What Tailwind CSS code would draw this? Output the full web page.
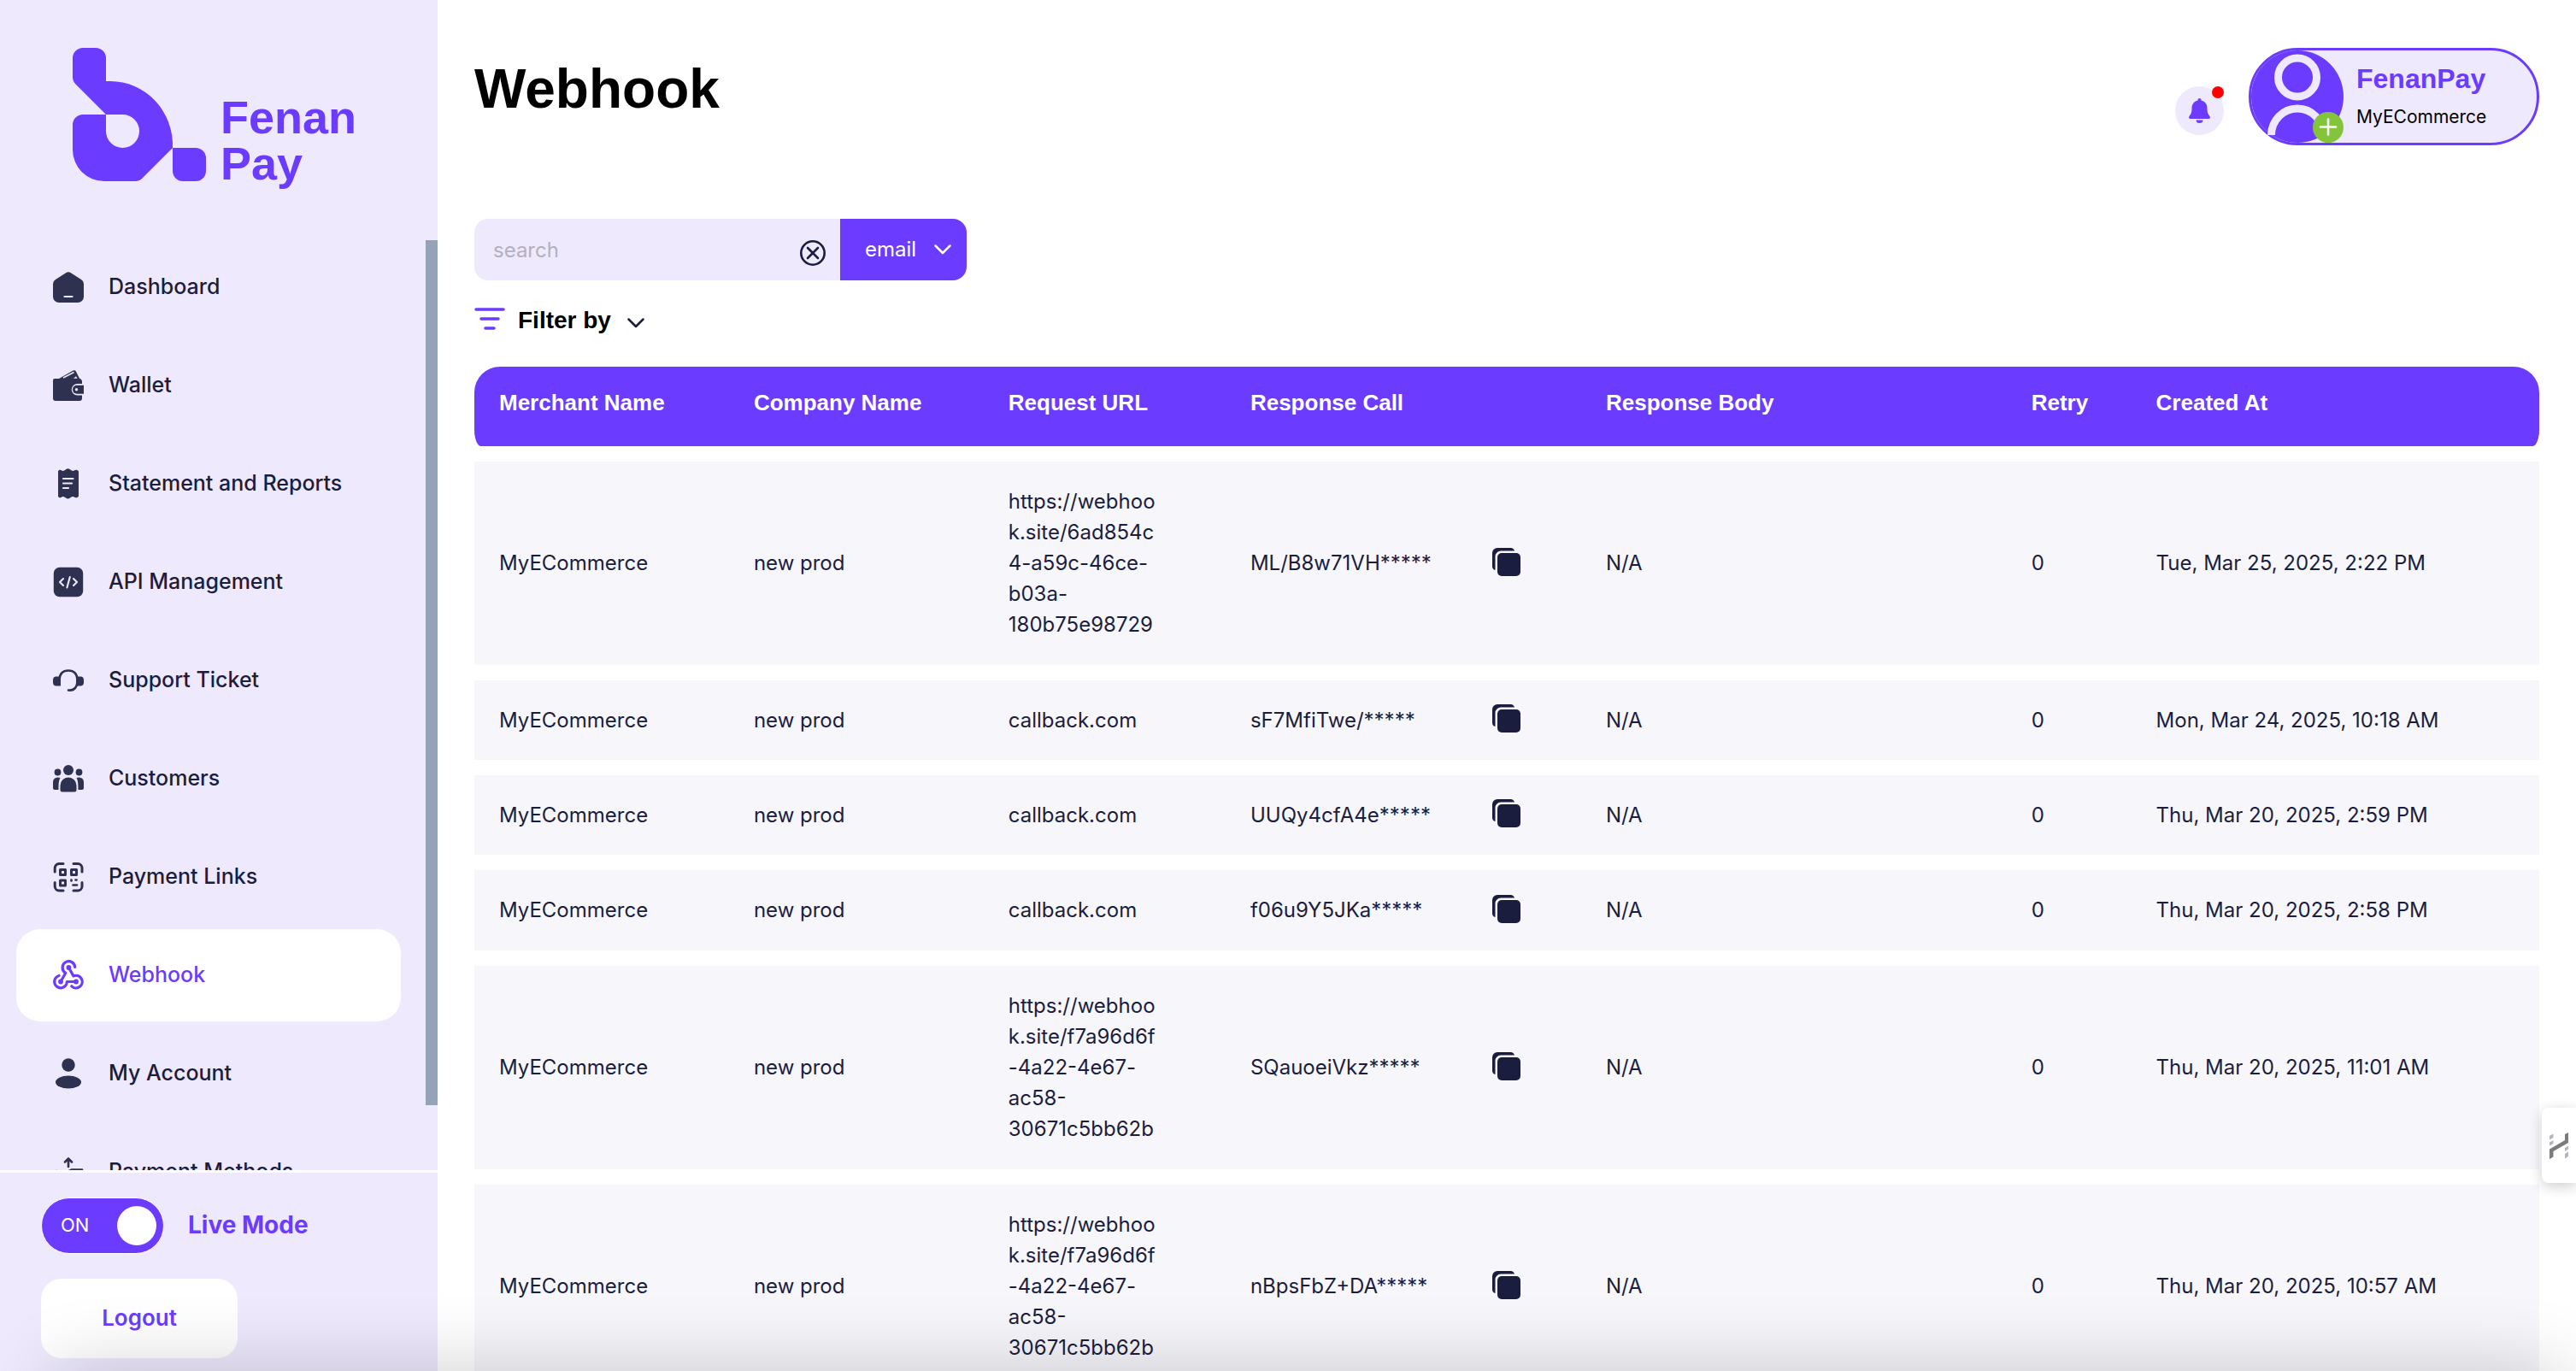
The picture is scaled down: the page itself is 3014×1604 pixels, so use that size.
<!DOCTYPE html>
<html lang="en">
<head>
<meta charset="utf-8">
<meta name="viewport" content="width=device-width, initial-scale=1">
<title>Webhook - FenanPay</title>
<script src="https://cdn.jsdelivr.net/npm/@tailwindcss/browser@4"></script>
</head>
<body class="relative flex h-screen overflow-hidden bg-white font-['Inter',sans-serif] text-2xl text-[#1b1d3e]">

<svg class="hidden" aria-hidden="true">
  <symbol id="copy" viewBox="0 0 33 33">
    <path fill="currentColor" d="M6 0H21a5 5 0 0 1 5 3.500H10a6.500 6.500 0 0 0-6.500 6.500V26A5 5 0 0 1 0 21V6a6 6 0 0 1 6-6Z"/>
    <rect x="6" y="6" width="27" height="27" rx="5" fill="currentColor"/>
  </symbol>
  <symbol id="chevron" viewBox="0 0 20 12">
    <path d="M1.500 1.500 10 10l8.500-8.500" fill="none" stroke="currentColor" stroke-width="2.500" stroke-linecap="round" stroke-linejoin="round"/>
  </symbol>
</svg>

<!-- Sidebar -->
<aside class="flex w-[512px] shrink-0 flex-col bg-[#eee9fd]">
  <a href="#" class="flex h-[281px] shrink-0 items-start gap-4 pt-14 pl-[85px] text-[#6b3cff]">
    <svg class="h-[156px] w-[157px]" viewBox="85 56 157 156" fill="currentColor" aria-hidden="true">
      <path d="M97 56h15a12 12 0 0 1 12 12v27h5a73 75 0 0 1 73 78l-34 34a14 14 0 0 1-9 5h-37a37 37 0 0 1-37-37v-29a12 12 0 0 1 12-12h27v19.500a19.500 19.500 0 1 0 19.500-19.500H124L88.500 98.500a12 12 0 0 1-3.500-8V68a12 12 0 0 1 12-12Z"/>
      <path d="M202 173h27a12 12 0 0 1 12 12v15a12 12 0 0 1-12 12h-15a12 12 0 0 1-12-12Z"/>
    </svg>
    <span class="flex flex-col pt-[54px] font-['Liberation_Sans',sans-serif] text-[54px] leading-[54px] font-bold"><span>Fenan</span><span>Pay</span></span>
  </a>

  <div class="flex min-h-0 flex-1 justify-between">
    <nav class="flex w-[469px] flex-col gap-[7px] overflow-hidden pt-px pl-[19px] text-[25px] font-medium">
      <a href="#" class="flex h-[108px] shrink-0 items-center gap-[29px] rounded-[28px] pl-[43px]">
        <svg class="size-9 text-[#2e3150]" viewBox="0 0 36 36" fill="currentColor"><path d="M15.500 1a5 5 0 0 1 5 0L33 9a6 6 0 0 1 3 5v15a7 7 0 0 1-7 7H7a7 7 0 0 1-7-7V14a6 6 0 0 1 3-5Z"/><path d="M13.500 29h9" stroke="#eee9fd" stroke-width="2.200" stroke-linecap="round"/></svg>
        Dashboard</a>
      <a href="#" class="flex h-[108px] shrink-0 items-center gap-[29px] rounded-[28px] pl-[43px]">
        <svg class="size-9 text-[#2e3150]" viewBox="0 0 36 36" fill="currentColor"><path d="M2 10h5L23.500.6a2.500 2.500 0 0 1 3.400 1L31 9.800A4 4 0 0 1 34 13v3h-5.500a6.500 6.500 0 0 0 0 13.500H34V33a3 3 0 0 1-3 3H3a3 3 0 0 1-3-3V12a2 2 0 0 1 2-2Z"/><path d="M12 9 24.500 2.500" stroke="#eee9fd" stroke-width="1.600"/><path d="m24 9.800 3-2.600 1.600 2.600Z" fill="#eee9fd"/><path d="M28 17.800h8v10h-8a5 5 0 0 1 0-10Z"/><circle cx="27.500" cy="22.800" r="1.700" fill="#eee9fd"/></svg>
        Wallet</a>
      <a href="#" class="flex h-[108px] shrink-0 items-center gap-[29px] rounded-[28px] pl-[43px]">
        <svg class="size-9 text-[#2e3150]" viewBox="0 0 36 36" fill="currentColor"><path d="M6 3.500C7 1 9 1.500 11 3c2 0 2.500-.5 4-1.700a4 4 0 0 1 5 0C21.500 2.500 22 3 24 3c2-1.500 4.500-2 6 .5v29c-1.500 2.500-4 2-6 .5-2 0-2.500.5-4 1.500a4 4 0 0 1-5 0C13.500 33.500 13 33 11 33c-2 1.500-4 2-5-.5Z"/><path d="M12 12h11.500M12 17.500h10M12 23h6" stroke="#eee9fd" stroke-width="2.200" stroke-linecap="round"/></svg>
        Statement and Reports</a>
      <a href="#" class="flex h-[108px] shrink-0 items-center gap-[29px] rounded-[28px] pl-[43px]">
        <svg class="size-9 text-[#2e3150]" viewBox="0 0 36 36" fill="none"><rect x=".8" y=".8" width="34.400" height="34.400" rx="7" fill="currentColor"/><path d="m12 14-4 4 4 4M24 14l4 4-4 4M19.800 12l-3.400 12.500" stroke="#eee9fd" stroke-width="2.100" stroke-linecap="round" stroke-linejoin="round"/></svg>
        API Management</a>
      <a href="#" class="flex h-[108px] shrink-0 items-center gap-[29px] rounded-[28px] pl-[43px]">
        <svg class="size-9 text-[#2e3150]" viewBox="0 0 36 36" fill="currentColor"><path d="M7.500 17C8 9.500 12 6.500 18 6.500S28 10 28.500 17c.4 8-3 13.500-10.500 12.500" fill="none" stroke="currentColor" stroke-width="2.600" stroke-linecap="round"/><path d="M4 13.500h5v11H4a4 4 0 0 1-4-4v-3a4 4 0 0 1 4-4ZM27 13.500h5a4 4 0 0 1 4 4v3a4 4 0 0 1-4 4h-5Z"/></svg>
        Support Ticket</a>
      <a href="#" class="flex h-[108px] shrink-0 items-center gap-[29px] rounded-[28px] pl-[43px]">
        <svg class="size-9 text-[#2e3150]" viewBox="0 0 36 36" fill="currentColor"><circle cx="18" cy="8" r="6"/><circle cx="5.500" cy="10.500" r="3.900"/><circle cx="30.500" cy="10.500" r="3.900"/><path d="M8.500 31V26a9.500 9.500 0 0 1 19 0v5a2.500 2.500 0 0 1-2.500 2.500H11A2.500 2.500 0 0 1 8.500 31Z"/><path d="M8.500 17C7 20 6.500 22 6.500 31H2a2 2 0 0 1-2-2v-7a5.500 5.500 0 0 1 5.500-5.500ZM27.500 17c1.500 3 2 5 2 14H34a2 2 0 0 0 2-2v-7a5.500 5.500 0 0 0-5.500-5.500Z"/></svg>
        Customers</a>
      <a href="#" class="flex h-[108px] shrink-0 items-center gap-[29px] rounded-[28px] pl-[43px]">
        <svg class="size-9 text-[#2e3150]" viewBox="0 0 36 36" fill="none" stroke="currentColor" stroke-width="3" stroke-linecap="round"><path d="M2.200 12V7.500a5 5 0 0 1 5-5H12M24 2.500h5a5 5 0 0 1 5 5V12M34 24.500V29a5 5 0 0 1-5 5h-5M12 34H7.200a5 5 0 0 1-5-5v-4.500"/><g stroke-linejoin="round"><path d="M8.500 9.500h6v6h-6ZM21.500 9.500h6v6h-6ZM8.500 22h6v6h-6Z"/></g><path d="M21.500 21.500v1M26.500 21.500h1M23.500 27.500h4.500" stroke-width="2.700"/></svg>
        Payment Links</a>
      <a href="#" aria-current="page" class="flex h-[108px] shrink-0 items-center gap-[29px] rounded-[28px] bg-white pl-[43px] text-[#6b3cff]">
        <svg class="size-9" viewBox="0 0 36 36" fill="none" stroke="currentColor" stroke-width="3.200" stroke-linecap="round" stroke-linejoin="round"><path d="M25.700 8.500A7.300 7.300 0 1 0 14.800 15.300L9 25.500"/><path d="M18.400 9 24 18.900A7.300 7.300 0 1 1 21.800 30.800"/><path d="M27 25.500H16.300A7.300 7.300 0 1 1 7 18.500"/><circle cx="18.400" cy="9" r="1.300"/><circle cx="9" cy="25.500" r="1.300"/><circle cx="27" cy="25.500" r="1.300"/></svg>
        Webhook</a>
      <a href="#" class="flex h-[108px] shrink-0 items-center gap-[29px] rounded-[28px] pl-[43px]">
        <svg class="size-9 text-[#2e3150]" viewBox="0 0 36 36" fill="currentColor"><circle cx="18" cy="8" r="7.700"/><ellipse cx="18" cy="28" rx="15" ry="7.500"/></svg>
        My Account</a>
      <a href="#" class="flex h-[108px] shrink-0 items-center gap-[29px] rounded-[28px] pl-[43px]">
        <svg class="size-9 text-[#2e3150]" viewBox="0 0 36 36" fill="none" stroke="currentColor" stroke-width="2.600" stroke-linecap="round" stroke-linejoin="round"><path d="M18 12V3M14 6.500l4-4 4 4M4 17v14h12M19 17l3-1.500h12V31H22"/></svg>
        Payment Methods</a>
    </nav>
    <div class="h-[93%] w-[14px] bg-[#94a3b8]"></div>
  </div>

  <div class="flex h-[235px] shrink-0 flex-col items-start border-t-3 border-white pt-[29px] pl-12">
    <label class="flex cursor-pointer items-center gap-7 text-[28px] font-bold text-[#6b3cff]">
      <input type="checkbox" role="switch" checked class="sr-only">
      <span class="flex h-[66px] w-36 items-center justify-between rounded-full border border-white bg-[#6b3cff] pr-2 pl-[22px] text-[22px] font-normal text-white">ON<span class="size-[46px] rounded-full bg-white"></span></span>
      Live Mode
    </label>
    <button class="mt-[29px] h-[93px] w-[230px] rounded-3xl bg-white text-[26px] font-semibold text-[#6b3cff]">Logout</button>
  </div>
</aside>

<!-- Content -->
<main class="min-w-0 flex-1 overflow-hidden pr-[43px] pl-[43px]">
  <header class="flex h-64 items-start justify-between pt-14">
    <h1 class="pt-2 font-['Liberation_Sans',sans-serif] text-[64px] leading-[80px] font-bold text-black">Webhook</h1>
    <div class="flex items-start gap-[29px]">
      <button aria-label="Notifications" class="relative mt-[45px] grid size-[57px] place-items-center rounded-full bg-[#eee9fd] text-[#6b3cff]">
        <svg class="h-[29px] w-[25px]" viewBox="0 0 25 29" fill="currentColor"><path d="M12.500 0a2 2 0 0 1 2 2v.6c4.500 1 7 4.400 7 9 0 5 .7 6.500 3 9.400.9 1.200.3 3-1.200 3H1.700C.2 24-.4 22.200.5 21c2.300-2.900 3-4.400 3-9.400 0-4.600 2.500-8 7-9V2a2 2 0 0 1 2-2ZM8.500 25.500h8a4 3.500 0 0 1-8 0Z"/></svg>
        <span class="absolute top-0 right-0 size-[14px] rounded-full bg-[#ff0000]"></span>
      </button>
      <button class="flex h-[114px] w-[340px] items-center gap-[15px] rounded-full border-3 border-[#6b3cff] bg-[#eee9fd] text-left">
        <span class="relative size-[108px] shrink-0">
          <svg class="size-[108px]" viewBox="0 0 108 108"><circle cx="54" cy="54" r="54" fill="#6b3cff"/><g fill="none" stroke="#eee9fd" stroke-width="9"><circle cx="54" cy="31.500" r="22.500"/><path d="M23.500 99a30.500 31 0 0 1 61 0"/></g></svg>
          <svg class="absolute right-0 bottom-0 size-9" viewBox="0 0 36 36"><circle cx="18" cy="18" r="18" fill="#84c43a"/><path d="M9 17.500h18M18 8.500v18" stroke="#fff" stroke-width="2.600" stroke-linecap="round"/></svg>
        </span>
        <span class="flex flex-col gap-[9px] pt-[3px]">
          <span class="font-['Liberation_Sans',sans-serif] text-[32px] leading-9 font-bold text-[#6b3cff]">FenanPay</span>
          <span class="text-[21px] leading-9 text-black">MyECommerce</span>
        </span>
      </button>
    </div>
  </header>

  <form class="flex h-[72px] w-[576px]">
    <div class="relative flex-1">
      <input type="text" aria-label="Search webhooks" placeholder="search" class="h-full w-full rounded-l-2xl bg-[#eee9fd] pr-16 pl-[22px] placeholder:text-[#b3b0bf]">
      <button type="button" aria-label="Clear" class="absolute top-[25px] right-[17px] size-[30px]">
        <svg viewBox="0 0 30 30" fill="none" stroke="currentColor" stroke-width="2.600" stroke-linecap="round"><circle cx="15" cy="15" r="13.700"/><path d="m9 9 12 12M21 9 9 21"/></svg>
      </button>
    </div>
    <div class="relative w-[148px]">
      <select aria-label="Search field" class="h-full w-full appearance-none rounded-r-2xl bg-[#6b3cff] pl-[29px] text-white"><option>email</option></select>
      <svg class="pointer-events-none absolute top-[30px] right-[18px] h-3 w-5 text-white"><use href="#chevron"/></svg>
    </div>
  </form>

  <button class="mt-[27px] flex h-10 items-center gap-[15px] text-black">
    <svg class="mb-1 h-[26px] w-9" viewBox="0 0 36 26" fill="none" stroke="#6b3cff" stroke-width="3.500" stroke-linecap="round"><path d="M2 2h32M8 13h20M13 24h10"/></svg>
    <span class="font-['Liberation_Sans',sans-serif] text-[28px] font-bold">Filter by</span>
    <svg class="mt-1.5 ml-1 h-3 w-5 text-[#1b1d3e]"><use href="#chevron"/></svg>
  </button>

  <table class="mt-4 w-full table-fixed border-separate border-spacing-x-0 border-spacing-y-[18px] text-left">
    <colgroup><col class="w-[12.330%]"><col class="w-[12.330%]"><col class="w-[11.720%]"><col class="w-[17.220%]"><col class="w-[20.600%]"><col class="w-[6.040%]"><col></colgroup>
    <thead class="font-['Liberation_Sans',sans-serif] text-[26px] text-white">
      <tr class="h-[93px]">
        <th class="rounded-tl-[30px] rounded-bl-[8px_19px] bg-[#6b3cff] pb-2 pl-[29px]">Merchant Name</th>
        <th class="bg-[#6b3cff] pb-2 pl-[29px]">Company Name</th>
        <th class="bg-[#6b3cff] pb-2 pl-[29px]">Request URL</th>
        <th class="bg-[#6b3cff] pb-2 pl-[29px]">Response Call</th>
        <th class="bg-[#6b3cff] pb-2 pl-[29px]">Response Body</th>
        <th class="bg-[#6b3cff] pb-2 pl-[29px]">Retry</th>
        <th class="rounded-tr-[30px] rounded-br-[8px_19px] bg-[#6b3cff] pb-2 pl-[29px]">Created At</th>
      </tr>
    </thead>
    <tbody class="leading-9">
      <tr class="h-[238px] bg-[#f7f6fb]">
        <td class="pl-[29px]">MyECommerce</td><td class="pl-[29px]">new prod</td>
        <td class="pl-[29px]"><div class="w-[180px] wrap-break-word">https://webhook.site/6ad854c4-a59c-46ce-b03a-180b75e98729</div></td>
        <td class="pl-[29px]"><div class="flex w-[316px] items-center justify-between">ML/B8w71VH***** <button aria-label="Copy" class="mb-1"><svg class="size-[33px]"><use href="#copy"/></svg></button></div></td>
        <td class="pl-[29px]">N/A</td><td class="pl-[29px]">0</td><td class="pl-[29px]">Tue, Mar 25, 2025, 2:22 PM</td>
      </tr>
      <tr class="h-[93px] bg-[#f7f6fb]">
        <td class="pl-[29px]">MyECommerce</td><td class="pl-[29px]">new prod</td>
        <td class="pl-[29px]">callback.com</td>
        <td class="pl-[29px]"><div class="flex w-[316px] items-center justify-between">sF7MfiTwe/***** <button aria-label="Copy" class="mb-1"><svg class="size-[33px]"><use href="#copy"/></svg></button></div></td>
        <td class="pl-[29px]">N/A</td><td class="pl-[29px]">0</td><td class="pl-[29px]">Mon, Mar 24, 2025, 10:18 AM</td>
      </tr>
      <tr class="h-[93px] bg-[#f7f6fb]">
        <td class="pl-[29px]">MyECommerce</td><td class="pl-[29px]">new prod</td>
        <td class="pl-[29px]">callback.com</td>
        <td class="pl-[29px]"><div class="flex w-[316px] items-center justify-between">UUQy4cfA4e***** <button aria-label="Copy" class="mb-1"><svg class="size-[33px]"><use href="#copy"/></svg></button></div></td>
        <td class="pl-[29px]">N/A</td><td class="pl-[29px]">0</td><td class="pl-[29px]">Thu, Mar 20, 2025, 2:59 PM</td>
      </tr>
      <tr class="h-[94px] bg-[#f7f6fb]">
        <td class="pl-[29px]">MyECommerce</td><td class="pl-[29px]">new prod</td>
        <td class="pl-[29px]">callback.com</td>
        <td class="pl-[29px]"><div class="flex w-[316px] items-center justify-between">f06u9Y5JKa***** <button aria-label="Copy" class="mb-1"><svg class="size-[33px]"><use href="#copy"/></svg></button></div></td>
        <td class="pl-[29px]">N/A</td><td class="pl-[29px]">0</td><td class="pl-[29px]">Thu, Mar 20, 2025, 2:58 PM</td>
      </tr>
      <tr class="h-[238px] bg-[#f7f6fb]">
        <td class="pl-[29px]">MyECommerce</td><td class="pl-[29px]">new prod</td>
        <td class="pl-[29px]"><div class="w-[180px] wrap-break-word">https://webhook.site/f7a96d6f-4a22-4e67-ac58-30671c5bb62b</div></td>
        <td class="pl-[29px]"><div class="flex w-[316px] items-center justify-between">SQauoeiVkz***** <button aria-label="Copy" class="mb-1"><svg class="size-[33px]"><use href="#copy"/></svg></button></div></td>
        <td class="pl-[29px]">N/A</td><td class="pl-[29px]">0</td><td class="pl-[29px]">Thu, Mar 20, 2025, 11:01 AM</td>
      </tr>
      <tr class="h-[238px] bg-[#f7f6fb]">
        <td class="pl-[29px]">MyECommerce</td><td class="pl-[29px]">new prod</td>
        <td class="pl-[29px]"><div class="w-[180px] wrap-break-word">https://webhook.site/f7a96d6f-4a22-4e67-ac58-30671c5bb62b</div></td>
        <td class="pl-[29px]"><div class="flex w-[316px] items-center justify-between">nBpsFbZ+DA***** <button aria-label="Copy" class="mb-1"><svg class="size-[33px]"><use href="#copy"/></svg></button></div></td>
        <td class="pl-[29px]">N/A</td><td class="pl-[29px]">0</td><td class="pl-[29px]">Thu, Mar 20, 2025, 10:57 AM</td>
      </tr>
    </tbody>
  </table>
</main>

<!-- Side tab of the helper widget -->
<button aria-label="Open helper" class="absolute right-0 bottom-[220px] flex h-[88px] w-10 items-center rounded-l-lg bg-white pl-[9px] shadow-[0_4px_16px_rgba(0,0,0,0.2)]">
  <svg class="h-[31px] w-[22px]" viewBox="0 0 22 31"><path fill="#7c7c7c" d="M22 0v12L4.500 22v6.500L0 31V19.500L18 9V2Z"/><path fill="#b5b3be" d="M0 4l4.500-2.500v4.500L0 8.500ZM0 11.500 4.500 9v4L0 15.500ZM18 18l4-2.500v4L18 22ZM18 25l4-2.500V28l-4 2.500Z"/></svg>
</button>

<!-- Soft shade along the bottom edge -->
<div class="pointer-events-none absolute inset-0 overflow-hidden"><div class="absolute top-full right-4 left-16 h-40 shadow-[0_0_90px_rgba(0,0,0,0.2)]"></div></div>
</body>
</html>
